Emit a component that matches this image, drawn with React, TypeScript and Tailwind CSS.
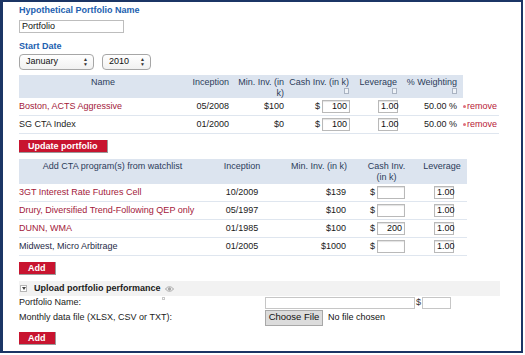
const portfolio = [
  { name: 'Boston, ACTS Aggressive', link: true, inception: '05/2008', min: '$100', cash: '100', lev: '1.00', weight: '50.00 %' },
  { name: 'SG CTA Index', link: false, inception: '01/2000', min: '$0', cash: '100', lev: '1.00', weight: '50.00 %' },
]

const watchlist = [
  { name: '3GT Interest Rate Futures Cell', color: 'text-[#a3203a]', inception: '10/2009', min: '$139', cash: '' },
  { name: 'Drury, Diversified Trend-Following QEP only', color: 'text-[#a3203a]', inception: '05/1997', min: '$100', cash: '' },
  { name: 'DUNN, WMA', color: 'text-[#a3203a]', inception: '01/1985', min: '$100', cash: '200' },
  { name: 'Midwest, Micro Arbitrage', color: 'text-[#1f2b48]', inception: '01/2005', min: '$1000', cash: '' },
]

function Info() {
  return <span className="inline-block w-[5px] h-[6px] border border-[#a9b3c2] bg-[#eef2f7]" />
}

function Field({ value = '', w, align = 'right' }: { value?: string; w: string; align?: 'right' | 'center' }) {
  return (
    <div className={`${w} h-[13px] bg-white border border-[#b9b9b9] shadow-[inset_0_1px_1px_rgba(0,0,0,0.12)] leading-[11px] px-[2px] text-[#111] ${align === 'right' ? 'text-right' : 'text-center'}`}>
      {value}
    </div>
  )
}

function RedButton({ label }: { label: string }) {
  return (
    <div className="flex">
      <div className="flex items-center h-[13px] px-[9px] bg-[#c8142f] border-b border-r border-[#9a9a9a] text-white font-bold leading-none">
        {label}
      </div>
    </div>
  )
}

function Select({ label, w }: { label: string; w: string }) {
  return (
    <div className={`${w} h-[16px] flex items-center justify-between pl-[6px] pr-[5px] rounded-[4px] border border-[#a6a6a6] bg-gradient-to-b from-white to-[#f1f1f1] text-[#111]`}>
      <span>{label}</span>
      <span className="flex flex-col leading-none text-[5px] text-[#333]">
        <span>▲</span>
        <span>▼</span>
      </span>
    </div>
  )
}

export default function App() {
  return (
    <div className="w-[525px] h-[355px] bg-white font-['Liberation_Sans',Arial,sans-serif] text-[9px] text-[#1a1a1a]">
      <div className="w-[523px] h-[353px] border-l-[3px] border-t-2 border-r-2 border-b-2 border-[#1b3565] pl-[16px] pt-[3px]">
        <div className="h-[11px] leading-[11px] font-bold text-[#2260b0]">Hypothetical Portfolio Name</div>
        <div className="mt-[4px] w-[105px] h-[13px] border border-[#bdbdbd] leading-[11px] pl-[2px] text-[#111]">Portfolio</div>
        <div className="mt-[8px] h-[11px] leading-[11px] font-bold text-[#2260b0]">Start Date</div>
        <div className="mt-[2px] flex gap-[8px]">
          <Select label="January" w="w-[75px]" />
          <Select label="2010" w="w-[49px]" />
        </div>

        {/* current portfolio */}
        <div className="mt-[5px] w-[480px]">
          <div className="flex w-[444px] h-[23px] bg-[#dce4ef] text-[#2c3c5a] leading-[11px] pt-[2px]">
            <div className="w-[168px] text-center">Name</div>
            <div className="w-[45px] text-right pr-[3px]">Inception</div>
            <div className="w-[53px] text-right pr-[1px]">Min. Inv. (in<br />k)</div>
            <div className="w-[66px] flex flex-col items-end pr-[2px]">
              <span>Cash Inv. (in k)</span>
              <Info />
            </div>
            <div className="w-[49px] flex flex-col items-end pr-[3px]">
              <span>Leverage</span>
              <Info />
            </div>
            <div className="w-[63px] flex flex-col items-end pr-[6px]">
              <span>% Weighting</span>
              <Info />
            </div>
          </div>
          {portfolio.map(r => (
            <div key={r.name} className="flex items-center h-[18px] border-b border-[#dfe6ef]">
              <div className={`w-[168px] ${r.link ? 'text-[#a3203a]' : 'text-[#1a1a1a]'}`}>{r.name}</div>
              <div className="w-[45px] text-right pr-[3px]">{r.inception}</div>
              <div className="w-[53px] text-right pr-[1px]">{r.min}</div>
              <div className="w-[66px] flex items-center justify-end pr-[1px] gap-[1px]">
                <span className="mr-[1px]">$</span>
                <Field value={r.cash} w="w-[28px]" />
              </div>
              <div className="w-[49px] flex justify-end pr-[2px]">
                <Field value={r.lev} w="w-[20px]" align="center" />
              </div>
              <div className="w-[63px] text-right pr-[6px]">{r.weight}</div>
              <div className="flex items-center text-[#b72037]">
                <span className="w-[3px] h-[3px] rounded-full bg-[#e0707f] mr-[1px]" />
                remove
              </div>
            </div>
          ))}
        </div>

        <div className="mt-[6px]">
          <RedButton label="Update portfolio" />
        </div>

        {/* watchlist */}
        <div className="mt-[6px] w-[448px]">
          <div className="flex h-[25px] bg-[#dce4ef] text-[#2c3c5a] leading-[11px] pt-[2px]">
            <div className="w-[187px] text-center">Add CTA program(s) from watchlist</div>
            <div className="w-[72px] text-center">Inception</div>
            <div className="w-[82px] text-center">Min. Inv. (in k)</div>
            <div className="w-[53px] text-center">Cash Inv.<br />(in k)</div>
            <div className="w-[54px] text-center pl-[4px]">Leverage</div>
          </div>
          {watchlist.map(r => (
            <div key={r.name} className="flex items-center h-[18px] border-b border-[#dfe6ef]">
              <div className={`w-[187px] ${r.color}`}>{r.name}</div>
              <div className="w-[72px] text-center">{r.inception}</div>
              <div className="w-[82px] text-right pr-[14px]">{r.min}</div>
              <div className="w-[53px] flex items-center pl-[10px] gap-[2px]">
                <span>$</span>
                <Field value={r.cash} w="w-[28px]" />
              </div>
              <div className="w-[54px] flex justify-center pl-[8px]">
                <Field value="1.00" w="w-[20px]" align="center" />
              </div>
            </div>
          ))}
        </div>

        <div className="mt-[6px]">
          <RedButton label="Add" />
        </div>

        {/* upload */}
        <div className="mt-[6px] w-[481px] h-[15px] bg-[#f2f2f2] flex items-center relative">
          <span className="ml-[1px] w-[7px] h-[7px] border border-[#b5b5b5] bg-white flex items-center justify-center">
            <svg width="4" height="3" viewBox="0 0 4 3"><path d="M0 0 H4 L2 3 Z" fill="#444" /></svg>
          </span>
          <span className="ml-[7px] font-bold text-[#1a1a1a]">Upload portfolio performance</span>
          <svg className="ml-[4px]" width="9" height="6" viewBox="0 0 18 12" fill="none" stroke="#a8a8a8" strokeWidth="2">
            <path d="M1 6 C5 0, 13 0, 17 6 C13 12, 5 12, 1 6 Z" />
            <circle cx="9" cy="6" r="2.5" fill="#a8a8a8" />
          </svg>
          <span className="absolute left-[143px] top-[16px] w-[3px] h-[3px] border border-[#c8c8c8]" />
        </div>
        <div className="flex items-center h-[12px] mt-[1px]">
          <div className="w-[246px] text-[#222]">Portfolio Name:</div>
          <div className="w-[150px] h-[12px] border border-[#c6c6c6] bg-white" />
          <span className="mx-[1px] text-[#333]">$</span>
          <div className="w-[29px] h-[12px] border border-[#c6c6c6] bg-white" />
        </div>
        <div className="flex items-center h-[17px]">
          <div className="w-[246px] text-[#222]">Monthly data file (XLSX, CSV or TXT):</div>
          <div className="h-[16px] w-[58px] flex items-center justify-center bg-[#dcdcdc] border border-[#a8a8a8] text-[#111] text-[9.5px]">Choose File</div>
          <span className="ml-[5px] text-[#111]">No file chosen</span>
        </div>

        <div className="mt-[6px]">
          <RedButton label="Add" />
        </div>
      </div>
    </div>
  )
}
